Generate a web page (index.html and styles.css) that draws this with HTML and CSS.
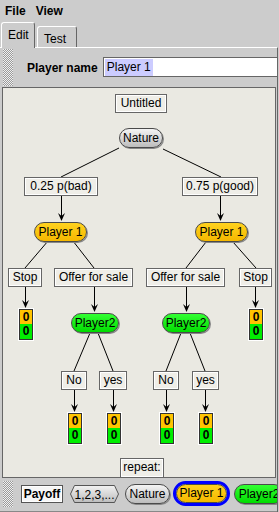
FILE: index.html
```html
<!DOCTYPE html>
<html lang="en">
<head>
  <title>Game Editor</title>
  <link rel="stylesheet" href="styles.css">
</head>
<body>

  <div class="menubar">
    <span>File</span>
    <span>View</span>
  </div>

  <div class="tabs">
    <div class="tab active">Edit</div>
    <div class="tab test">Test</div>
  </div>

  <div class="editor">
    <div class="namebar">
      <div class="grip"></div>
      <label for="playerName">Player name</label>
      <div class="field" id="playerName"><span class="sel">Player 1</span></div>
    </div>

    <div class="canvas">
      <svg class="edges" width="272" height="389">
        <g stroke="#000" stroke-width="1" fill="none">
          <line x1="116" y1="60" x2="58" y2="89"/>
          <line x1="160" y1="61" x2="218" y2="89"/>
          <line x1="45" y1="153" x2="22" y2="180"/>
          <line x1="70" y1="153" x2="91" y2="180"/>
          <line x1="203" y1="154" x2="183" y2="180"/>
          <line x1="230" y1="154" x2="253" y2="180"/>
          <line x1="87" y1="245" x2="71" y2="283"/>
          <line x1="95" y1="245" x2="110" y2="283"/>
          <line x1="178" y1="245" x2="163" y2="283"/>
          <line x1="187" y1="245" x2="202" y2="283"/>
          <line x1="58.5" y1="108" x2="58.5" y2="130"/>
          <line x1="217.5" y1="108" x2="217.5" y2="130"/>
          <line x1="22.5" y1="199" x2="22.5" y2="217"/>
          <line x1="91.5" y1="199" x2="91.5" y2="221"/>
          <line x1="183.5" y1="199" x2="183.5" y2="221"/>
          <line x1="252.5" y1="199" x2="252.5" y2="217"/>
          <line x1="71.5" y1="302" x2="71.5" y2="321"/>
          <line x1="110.5" y1="302" x2="110.5" y2="321"/>
          <line x1="163.5" y1="302" x2="163.5" y2="321"/>
          <line x1="202.5" y1="302" x2="202.5" y2="321"/>
        </g>
        <!-- arrow heads -->
        <g fill="#000">
          <path d="M55 125L58.5 133L62 125L58.5 128Z"/>
          <path d="M214 125L217.5 133L221 125L217.5 128Z"/>
          <path d="M19 212L22.5 220L26 212L22.5 215Z"/>
          <path d="M88 216L91.5 224L95 216L91.5 219Z"/>
          <path d="M180 216L183.5 224L187 216L183.5 219Z"/>
          <path d="M249 212L252.5 220L256 212L252.5 215Z"/>
          <path d="M68 316L71.5 324L75 316L71.5 319Z"/>
          <path d="M107 316L110.5 324L114 316L110.5 319Z"/>
          <path d="M160 316L163.5 324L167 316L163.5 319Z"/>
          <path d="M199 316L202.5 324L206 316L202.5 319Z"/>
        </g>
      </svg>

      <div class="node box" style="left:112px;top:6px;width:52px">Untitled</div>
      <div class="node pill nature" style="left:116px;top:40px;width:44px">Nature</div>

      <div class="node box" style="left:21px;top:89px;width:74px">0.25 p(bad)</div>
      <div class="node box" style="left:179px;top:89px;width:76px">0.75 p(good)</div>

      <div class="node pill p1" style="left:31px;top:134px;width:53px">Player 1</div>
      <div class="node pill p1" style="left:192px;top:134px;width:53px">Player 1</div>

      <div class="node box" style="left:5px;top:180px;width:34px">Stop</div>
      <div class="node box" style="left:51px;top:180px;width:79px">Offer for sale</div>
      <div class="node box" style="left:143px;top:180px;width:79px">Offer for sale</div>
      <div class="node box" style="left:236px;top:180px;width:33px">Stop</div>

      <div class="node payoff" style="left:16px;top:221px"><span class="a">0</span><span class="b">0</span></div>
      <div class="node pill p2" style="left:68px;top:225px;width:48px">Player2</div>
      <div class="node pill p2" style="left:159px;top:225px;width:48px">Player2</div>
      <div class="node payoff" style="left:246px;top:221px"><span class="a">0</span><span class="b">0</span></div>

      <div class="node box" style="left:58px;top:283px;width:26px">No</div>
      <div class="node box" style="left:96px;top:283px;width:28px">yes</div>
      <div class="node box" style="left:150px;top:283px;width:26px">No</div>
      <div class="node box" style="left:189px;top:283px;width:27px">yes</div>

      <div class="node payoff" style="left:65px;top:325px"><span class="a">0</span><span class="b">0</span></div>
      <div class="node payoff" style="left:104px;top:325px"><span class="a">0</span><span class="b">0</span></div>
      <div class="node payoff" style="left:157px;top:325px"><span class="a">0</span><span class="b">0</span></div>
      <div class="node payoff" style="left:196px;top:325px"><span class="a">0</span><span class="b">0</span></div>

      <div class="node box repeat" style="left:117px;top:370px;width:44px">repeat:</div>
    </div>

    <div class="palette">
      <div class="grip small"></div>
      <div class="tool payoffBtn">Payoff</div>
      <svg class="tool hex" width="49" height="18">
        <defs>
          <linearGradient id="greyFill" x1="0" y1="0" x2="0" y2="1">
            <stop offset="0" stop-color="#f2f2f2"/>
            <stop offset="1" stop-color="#bdbdbd"/>
          </linearGradient>
        </defs>
        <polygon points="4.5,0.5 44.5,0.5 48.5,9 44.5,17.5 4.5,17.5 0.5,9" fill="url(#greyFill)" stroke="#555"/>
        <text x="24.5" y="13.5" text-anchor="middle">1,2,3,...</text>
      </svg>
      <div class="tool pill nature">Nature</div>
      <div class="tool selected"><div class="pill p1">Player 1</div></div>
      <div class="tool pill p2">Player2</div>
    </div>
  </div>

</body>
</html>
```

FILE: styles.css
```css
* {
  box-sizing: border-box;
}

body {
  margin: 0;
  width: 279px;
  height: 512px;
  overflow: hidden;
  background-color: #cccccc;
  color: #000;
  font-family: "Liberation Sans", Arial, sans-serif;
  font-size: 12px;
}

.menubar {
  display: flex;
  gap: 10px;
  height: 22px;
  padding: 1px 0 0 5px;
  line-height: 21px;
  font-weight: bold;
}

.tabs {
  position: relative;
  z-index: 1;
  display: flex;
  align-items: flex-end;
  gap: 2px;
  height: 25px;
  padding-left: 1px;
}

.tab {
  width: 40px;
  height: 21px;
  padding: 5px 0 0 6px;
  line-height: 14px;
  background-color: #cccccc;
  border: 1px solid;
  border-color: #fff #666 transparent #fff;
  border-bottom: 0;
  border-radius: 3px 3px 0 0;
}

.tab.active {
  width: 34px;
  height: 26px;
  margin-bottom: -1px;
}

.editor {
  display: flex;
  flex-direction: column;
  width: 278px;
  height: 465px;
  border-top: 1px solid #fff;
  border-right: 1px solid #666;
}

.namebar {
  display: flex;
  align-items: center;
  height: 39px;
}

.grip {
  flex-shrink: 0;
  width: 10px;
  height: 37px;
  margin-left: 3px;
  background: repeating-conic-gradient(#9a9a9a 0 25%, #f0f0f0 0 50%) 0 0 / 2px 2px;
}

.grip.small {
  height: 26px;
  margin-left: 0;
}

label {
  margin-left: 14px;
  font-weight: bold;
}

.field {
  flex: 1;
  height: 20px;
  margin-left: 5px;
  margin-top: -2px;
  padding: 1px 0 0 1px;
  line-height: 17px;
  background-color: #fff;
  border: 1px solid #666;
  border-right: 0;
}

.sel {
  display: inline-block;
  padding: 0 2px;
  background-color: #ccccff;
}

.canvas {
  position: relative;
  height: 391px;
  margin: 0 1px 0 2px;
  background-color: #eae9e2;
  border: 1px solid #666;
  overflow: hidden;
}

.edges {
  position: absolute;
  left: 0;
  top: 0;
}

.node {
  position: absolute;
  height: 19px;
  line-height: 17px;
  text-align: center;
  white-space: nowrap;
}

.box {
  background-color: #efeee8;
  border: 1px solid #666;
  box-shadow: inset 0 0 0 1px #fff;
}

.repeat {
  border-bottom: 0;
}

.pill {
  height: 20px;
  line-height: 18px;
  text-align: center;
  white-space: nowrap;
  border: 1px solid #4a4a4a;
  border-radius: 10px;
  box-shadow: 1px 1px 0 #888;
}

.nature {
  background: linear-gradient(#f4f4f4, #bcbcbc);
}

.p1 {
  background: linear-gradient(#ffd21e, #f5b800);
}

.p2 {
  background: linear-gradient(#33ff33, #00dc00);
}

.payoff {
  width: 14px;
  height: auto;
  border: 1px solid #333;
  outline: 1px solid #fff;
  font-weight: bold;
  line-height: 14px;
}

.payoff span {
  display: block;
  height: 14px;
}

.payoff .a {
  background-color: #ffc400;
}

.payoff .b {
  height: 15px;
  background-color: #00ee00;
}

.palette {
  display: flex;
  align-items: center;
  height: 34px;
  padding: 0 0 2px 3px;
  overflow: hidden;
  border-bottom: 1px solid #888;
}

.tool {
  flex-shrink: 0;
}

.payoffBtn {
  width: 42px;
  height: 18px;
  margin-left: 8px;
  line-height: 16px;
  text-align: center;
  font-weight: bold;
  background-color: #f6f6f6;
  border: 1px solid #555;
  box-shadow: inset 0 0 0 1px #fff;
}

.hex {
  margin-left: 7px;
  overflow: visible;
}

.hex text {
  font-family: "Liberation Sans", Arial, sans-serif;
  font-size: 12px;
}

.palette .nature {
  width: 45px;
  margin-left: 6px;
}

.selected {
  margin-left: 3px;
  padding: 0;
  border: 3px solid #0000ff;
  border-radius: 13px;
}

.selected .pill {
  width: 51px;
  height: 19px;
  line-height: 17px;
  box-shadow: none;
}

.palette .p2 {
  width: 50px;
  margin-left: 4px;
}
```
